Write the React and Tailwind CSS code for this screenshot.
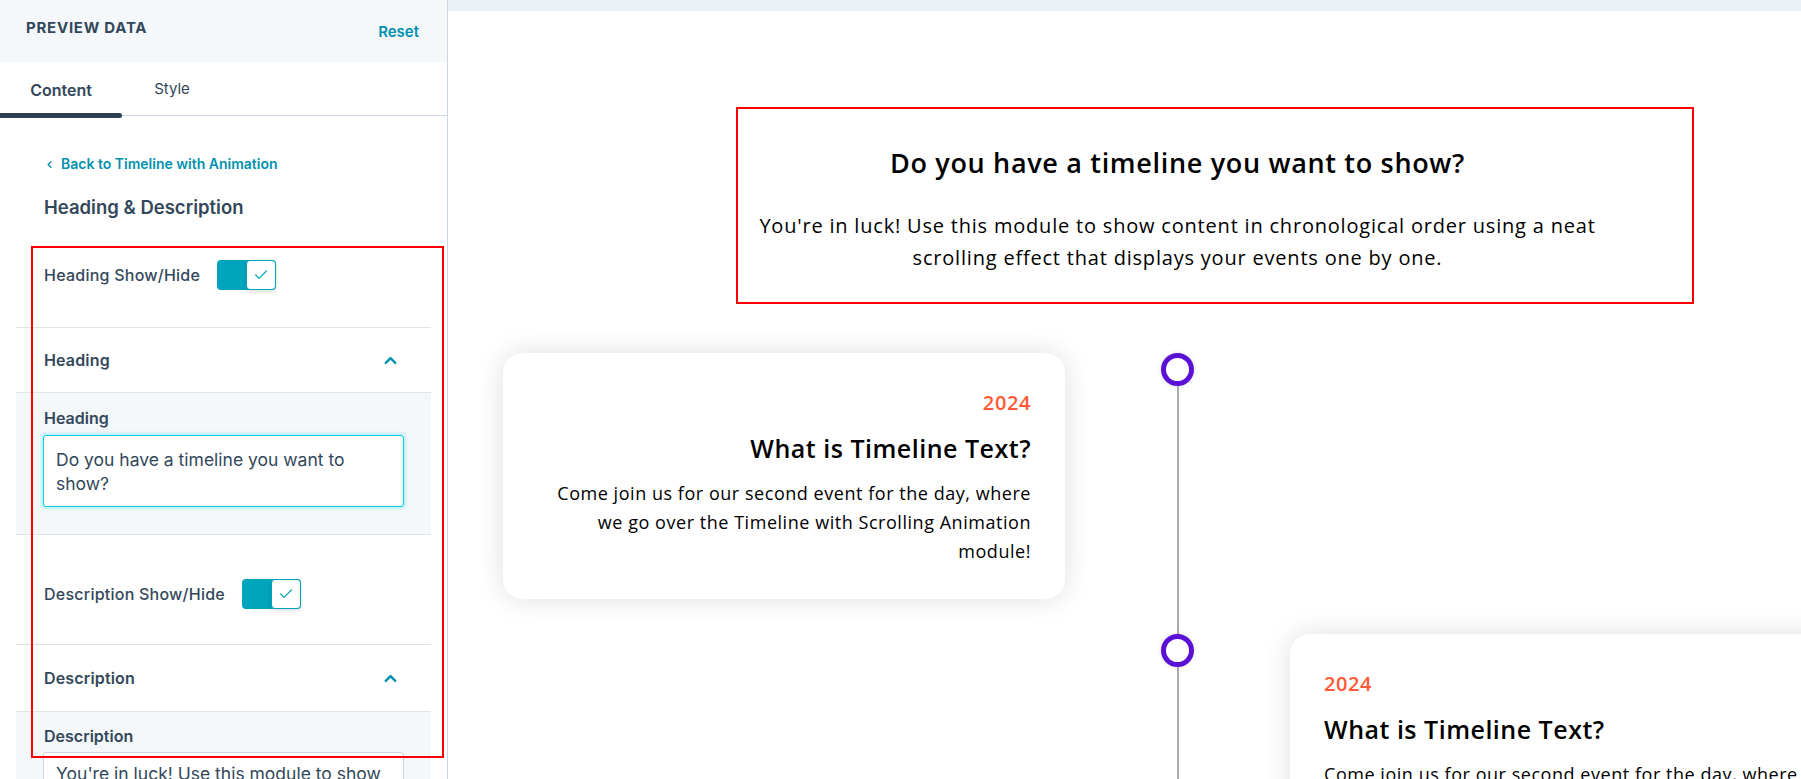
import React from "react";
import { Check, ChevronUp, ChevronLeft } from "lucide-react";

const sideFont = { fontFamily: "Inter, 'Noto Sans', sans-serif" };

const Toggle = () => (
  <div className="flex h-[30px] w-[59px] flex-none rounded-[4px] bg-[#00a4bd]">
    <div className="ml-auto flex h-[30px] w-[30px] items-center justify-center rounded-[4px] border border-[#00a4bd] bg-white shadow-[0_2px_4px_rgba(0,0,0,0.12)]">
      <Check size={16} strokeWidth={1.8} className="text-[#00a4bd]" />
    </div>
  </div>
);

const ToggleRow = ({ label, pad }) => (
  <div className={`flex items-center border-b border-[#dfe3eb] px-[28px] ${pad}`}>
    <span className="text-[16px] font-medium tracking-[0.015em] text-[#33475b]">{label}</span>
    <div className="ml-[17px]">
      <Toggle />
    </div>
  </div>
);

const AccordionHead = ({ label, h }) => (
  <div className={`flex items-center justify-between border-b border-[#dfe3eb] pl-[28px] pr-[31px] ${h}`}>
    <span className="text-[16px] font-semibold tracking-[0.01em] text-[#33475b]">{label}</span>
    <ChevronUp size={19} strokeWidth={3} className="text-[#0091ae]" />
  </div>
);

const Sidebar = () => (
  <aside
    className="h-[779px] w-[448px] flex-none overflow-hidden border-r border-[#cbd6e2] bg-white"
    style={sideFont}
  >
    <div className="flex h-[62px] items-start justify-between bg-[#f5f8fa] pl-[26px] pr-[28px] pt-[18px]">
      <span className="text-[15px] font-bold uppercase leading-5 tracking-[0.05em] text-[#33475b]">
        Preview Data
      </span>
      <span className="mt-1 text-[15px] font-semibold leading-5 text-[#0091ae]">Reset</span>
    </div>

    <div className="relative flex h-[54px] items-center border-b border-[#cbd6e2]">
      <div className="relative flex h-full w-[122px] items-center justify-center pt-[2px] text-[16px] font-semibold text-[#33475b]">
        Content
        <span className="absolute -bottom-[3px] left-0 h-[5px] w-[122px] rounded-r-full bg-[#2d3e50]" />
      </div>
      <div className="flex h-full w-[100px] items-center justify-center pt-[2px] text-[15px] text-[#33475b]">
        Style
      </div>
    </div>

    <div className="mx-4">
      <div className="flex items-center gap-[6px] pl-[28px] pt-[39px] text-[14px] font-semibold leading-[18px] text-[#0091ae]">
        <ChevronLeft size={11} strokeWidth={3} />
        <span>Back to Timeline with Animation</span>
      </div>
      <div className="mt-[21px] pl-[28px] text-[18.5px] font-semibold leading-[26px] text-[#33475b]">
        Heading &amp; Description
      </div>

      <ToggleRow label="Heading Show/Hide" pad="pt-[40px] pb-[37px]" />
      <AccordionHead label="Heading" h="h-[65px]" />
      <div className="border-b border-[#dfe3eb] bg-[#f5f8fa] px-[27px] pb-[27px] pt-[15px]">
        <div className="pl-px text-[16px] font-semibold leading-5 text-[#33475b]">Heading</div>
        <div className="mt-[7px] h-[72px] rounded-[3px] border border-[#00d0e4] bg-white px-[12px] pt-[12px] text-[17.5px] leading-6 text-[#33475b] shadow-[0_0_4px_1px_rgba(0,208,228,0.35)]">
          Do you have a timeline you want to show?
        </div>
      </div>

      <ToggleRow label="Description Show/Hide" pad="pt-[44px] pb-[35px]" />
      <AccordionHead label="Description" h="h-[67px]" />
      <div className="bg-[#f5f8fa] px-[27px] pt-[14px]">
        <div className="pl-px text-[16px] font-semibold leading-5 text-[#33475b]">Description</div>
        <div className="mt-[6px] h-[90px] rounded-[3px] border border-[#cbd6e2] bg-white px-[12px] pt-[9px] text-[17.5px] leading-6 text-[#33475b]">
          You're in luck! Use this module to show content in chronological order.
        </div>
      </div>
    </div>
  </aside>
);

const pFont = { fontFamily: "'Open Sans', 'Noto Sans', sans-serif" };

const Card = ({ right }) => (
  <div
    className={`w-[562px] rounded-[20px] bg-white px-[34px] pb-[33px] pt-[37px] shadow-[0_0_28px_rgba(0,0,0,0.13)] ${
      right ? "text-right" : "text-left"
    }`}
  >
    <div className="text-[20px] font-semibold leading-[26px] tracking-[0.03em] text-[#ff5a36]">2024</div>
    <div className="mt-[16px] text-[25px] font-semibold leading-[32px] tracking-[0.02em] text-black">
      What is Timeline Text?
    </div>
    <p className="mt-[15px] text-[18px] leading-[29px] tracking-[0.03em] text-black">
      Come join us for our second event for the day, where we go over the Timeline with
      Scrolling Animation module!
    </p>
  </div>
);

const Node = () => (
  <div className="h-[33px] w-[33px] flex-none rounded-full border-[5px] border-[#5b10d6] bg-white shadow-[0_0_4px_rgba(0,0,0,0.15)]" />
);

const Preview = () => (
  <main className="min-w-0 flex-1 overflow-hidden bg-white" style={pFont}>
    <div className="h-[11px] bg-[#eaf0f6]" />
    <div className="ml-[55px] w-[1349px]">
      <div className="pt-[134px] text-center">
        <h1 className="text-[27px] font-semibold leading-[36px] tracking-[0.025em] text-black">
          Do you have a timeline you want to show?
        </h1>
        <p className="mx-auto mt-[29px] max-w-[870px] text-[20px] leading-[32px] tracking-[0.04em] text-black">
          You're in luck! Use this module to show content in chronological order using a neat
          scrolling effect that displays your events one by one.
        </p>
      </div>

      <div className="mt-[79px] grid grid-cols-[562px_225px_562px]">
        <div className="pb-[35px]">
          <Card right />
        </div>
        <div className="flex flex-col items-center">
          <Node />
          <div className="w-[2px] flex-1 bg-[#ababab]" />
        </div>
        <div />

        <div />
        <div className="flex flex-col items-center">
          <Node />
          <div className="w-[2px] flex-1 bg-[#ababab]" />
        </div>
        <div className="pb-[35px]">
          <Card />
        </div>
      </div>
    </div>
  </main>
);

export default function App() {
  return (
    <div className="relative flex h-[779px] w-full overflow-hidden bg-white">
      <Sidebar />
      <Preview />
      {/* annotation boxes */}
      <div className="pointer-events-none absolute left-[31px] top-[246px] h-[512px] w-[413px] border-2 border-[#ff0000]" />
      <div className="pointer-events-none absolute left-[736px] top-[107px] h-[197px] w-[958px] border-2 border-[#ff0000]" />
    </div>
  );
}
